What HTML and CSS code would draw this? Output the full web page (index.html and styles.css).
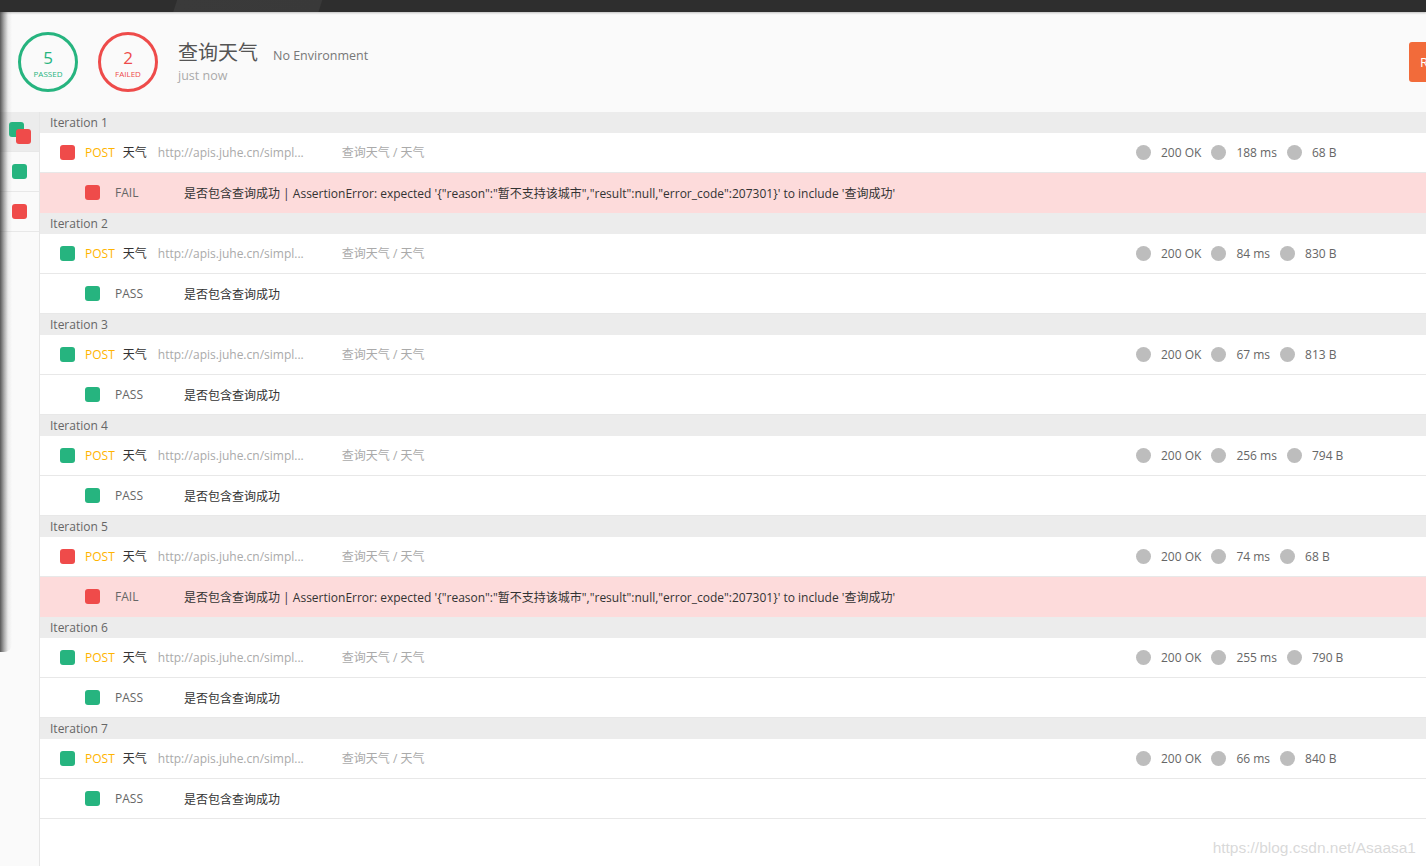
FILE: index.html
```html
<!DOCTYPE html>
<html>
<head>
<meta charset="utf-8">
<link rel="stylesheet" href="styles.css">
</head>
<body>
<div class="topbar"></div>
<div class="app">
  <header class="header">
    <div class="ring ring-pass"><span class="ring-num">5</span><span class="ring-label">PASSED</span></div>
    <div class="ring ring-fail"><span class="ring-num">2</span><span class="ring-label">FAILED</span></div>
    <div class="title-block">
      <div class="title-line"><span class="title">查询天气</span><span class="env">No Environment</span></div>
      <div class="time">just now</div>
    </div>
    <button class="run-btn">R</button>
  </header>
  <div class="body">
    <aside class="sidebar">
      <div class="side-item active"><span class="sq green sq-back"></span><span class="sq red sq-front"></span></div>
      <div class="side-item"><span class="sq green"></span></div>
      <div class="side-item"><span class="sq red"></span></div>
    </aside>
    <main class="main" id="main"></main>
  </div>
</div>
<div class="shadow-left"></div>
<div class="watermark">https://blog.csdn.net/Asaasa1</div>
<script>
var data = [
  {ok:false, ms:"188 ms", size:"68 B"},
  {ok:true, ms:"84 ms", size:"830 B"},
  {ok:true, ms:"67 ms", size:"813 B"},
  {ok:true, ms:"256 ms", size:"794 B"},
  {ok:false, ms:"74 ms", size:"68 B"},
  {ok:true, ms:"255 ms", size:"790 B"},
  {ok:true, ms:"66 ms", size:"840 B"}
];
var html = "";
data.forEach(function(d, i){
  var c = d.ok ? "green" : "red";
  html += '<section class="iter">' +
    '<div class="iter-head">Iteration ' + (i+1) + '</div>' +
    '<div class="req-row"><div class="req-left"><span class="sq ' + c + '"></span>' +
    '<span class="method">POST</span><span class="req-name">天气</span>' +
    '<span class="url">http://apis.juhe.cn/simpl...</span><span class="path">查询天气 / 天气</span></div>' +
    '<div class="stats"><span class="dot"></span><span class="stat">200 OK</span><span class="dot"></span><span class="stat">' + d.ms + '</span><span class="dot"></span><span class="stat">' + d.size + '</span></div></div>' +
    '<div class="test-row' + (d.ok ? '' : ' fail') + '"><span class="sq ' + c + '"></span><span class="test-status">' + (d.ok ? 'PASS' : 'FAIL') + '</span>' +
    '<span class="test-desc">是否包含查询成功' + (d.ok ? '' : ' | AssertionError: expected \'{"reason":"暂不支持该城市","result":null,"error_code":207301}\' to include \'查询成功\'') + '</span></div>' +
    '</section>';
});
document.getElementById("main").innerHTML = html;
</script>
</body>
</html>
```
FILE: styles.css
```css
* { box-sizing: border-box; }
html, body { margin: 0; padding: 0; }
body {
  width: 1426px;
  height: 866px;
  overflow: hidden;
  font-family: "Open Sans", "Noto Sans CJK SC", sans-serif;
  font-size: 12px;
  color: #333;
  background: #fafafa;
  position: relative;
}
.topbar {
  height: 12px;
  background: linear-gradient(108deg, #2e2e2e 0, #2e2e2e 168px, #3a3a3a 169px, #393939 306px, #2e2e2e 307px);
  box-shadow: 0 1px 2px rgba(0,0,0,0.25);
  position: relative;
  z-index: 2;
}
.app { display: flex; flex-direction: column; height: 854px; }
.header {
  height: 100px;
  flex-shrink: 0;
  background: #fafafa;
  display: flex;
  align-items: center;
  padding-left: 18px;
}
.ring {
  width: 60px;
  height: 60px;
  border-radius: 50%;
  border: 3px solid;
  display: flex;
  flex-direction: column;
  align-items: center;
  justify-content: center;
  margin-right: 20px;
  flex-shrink: 0;
  padding-top: 3px;
}
.ring-pass { border-color: #26b47f; color: #26b47f; }
.ring-fail { border-color: #ee4b4a; color: #ee4b4a; }
.ring-num { font-size: 17px; line-height: 18px; }
.ring-label { font-size: 8px; line-height: 10px; margin-top: 2px; }
.title-block { display: flex; flex-direction: column; flex: 1; margin-top: 1px; }
.title-line { display: flex; align-items: baseline; }
.title { font-size: 20px; color: #555; line-height: 26px; margin-right: 15px; }
.env { font-size: 12.5px; color: #777; }
.time { font-size: 12.5px; color: #aaa; line-height: 18px; margin-top: 1px; }
.run-btn {
  flex-shrink: 0;
  width: 30px;
  height: 40px;
  margin-right: -13px;
  background: #f26b3a;
  border: none;
  border-radius: 3px;
  color: #fff;
  font-family: "Open Sans", sans-serif;
  font-size: 13px;
  text-align: left;
  padding: 0 0 0 11px;
}
.body { display: flex; flex: 1; min-height: 0; }
.sidebar {
  width: 40px;
  flex-shrink: 0;
  background: #fafafa;
  border-right: 1px solid #e6e6e6;
}
.side-item {
  height: 40px;
  border-bottom: 1px solid #e8e8e8;
  display: flex;
  align-items: center;
  padding-left: 12px;
  position: relative;
}
.side-item.active { background: #ececec; }
.sq {
  display: inline-block;
  width: 15px;
  height: 15px;
  border-radius: 3px;
  flex-shrink: 0;
}
.green { background: #26b47f; }
.red { background: #ef4b4a; }
.sq-back { position: absolute; left: 9px; top: 10px; }
.sq-front { position: absolute; left: 16px; top: 17px; }
.main { flex: 1; background: #fff; }
.iter-head {
  height: 21px;
  line-height: 21px;
  background: #ececec;
  color: #666;
  padding-left: 10px;
}
.req-row {
  height: 40px;
  border-bottom: 1px solid #e8e8e8;
  display: flex;
  align-items: center;
  background: #fff;
  padding-bottom: 1px;
}
.req-left { flex: 1; display: flex; align-items: center; padding-left: 20px; white-space: nowrap; }
.req-left .sq { margin-right: 10px; }
.method { color: #ffb400; margin-right: 8px; }
.req-name { color: #333; margin-right: 11px; }
.url { color: #aaa; width: 174px; margin-right: 10px; overflow: hidden; }
.path { color: #aaa; }
.stats { width: 290px; flex-shrink: 0; display: flex; align-items: center; color: #666; }
.dot { width: 15px; height: 15px; border-radius: 50%; background: #bdbdbd; margin-right: 10px; }
.stat { margin-right: 10px; }
.test-row {
  height: 40px;
  border-bottom: 1px solid #e8e8e8;
  display: flex;
  align-items: center;
  padding-left: 45px;
  white-space: nowrap;
  background: #fff;
}
.test-row.fail { background: #fddbdb; border-bottom-color: #fddbdb; }
.test-row .sq { margin-right: 15px; }
.test-status { width: 69px; color: #666; }
.test-desc { color: #333; }
.shadow-left {
  position: absolute;
  left: 0;
  top: 12px;
  width: 12px;
  height: 640px;
  background: linear-gradient(90deg, rgba(60,60,60,0.85) 0, rgba(90,90,90,0.5) 4px, rgba(150,150,150,0.15) 8px, rgba(200,200,200,0) 12px);
  border-bottom-right-radius: 8px;
  z-index: 3;
}
.watermark {
  position: absolute;
  right: 10px;
  bottom: 9px;
  font-family: "Liberation Sans", Arial, sans-serif;
  font-size: 15.5px;
  color: rgba(200,200,200,0.7);
}
```
